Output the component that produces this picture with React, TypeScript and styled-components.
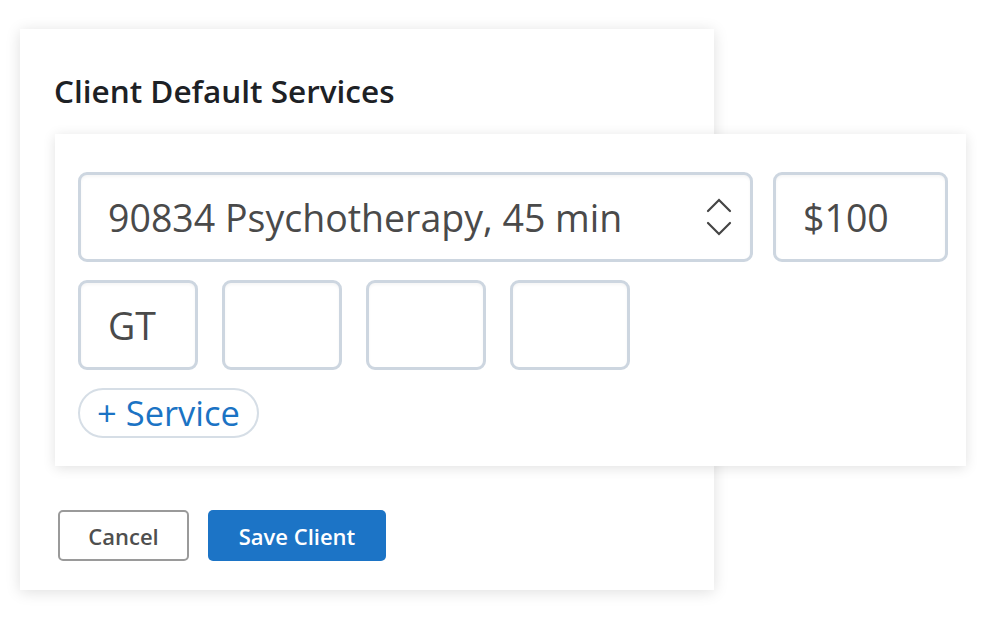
import styled, { createGlobalStyle } from "styled-components"

const GlobalStyle = createGlobalStyle`
    body {
        margin: 0;
        background: #ffffff;
        font-family: "Open Sans", "Liberation Sans", sans-serif;
    }
`

const Page = styled.div`
    padding: 29px 0 0 20px;
    width: 985px;
    height: 618px;
    box-sizing: border-box;
`

const Card = styled.section`
    width: 694px;
    box-sizing: border-box;
    padding: 42px 0 29px 34px;
    background: #fff;
    box-shadow: 0 2px 14px rgba(0, 0, 0, 0.13);
    display: flex;
    flex-direction: column;
`

const Title = styled.h2`
    margin: 0;
    font-size: 31.5px;
    line-height: 40px;
    font-weight: 600;
    color: #1d2125;
`

const Panel = styled.div`
    margin: 23px 0 0 1px;
    width: 911px;
    box-sizing: border-box;
    padding: 38px 18px 28px 23px;
    background: #fff;
    box-shadow: 0 2px 12px rgba(0, 0, 0, 0.12);
    display: flex;
    flex-direction: column;
    gap: 18px;
`

const Row = styled.div`
    display: flex;
    gap: 24px;
`

const TopRow = styled(Row)`
    gap: 20px;
`

const Field = styled.div<{ $w: number; $padRight?: number }>`
    flex-shrink: 0;
    width: ${p => p.$w}px;
    height: 90px;
    box-sizing: border-box;
    border: 3px solid #cdd6e0;
    border-radius: 9px;
    box-shadow: inset 0 2px 3px rgba(0, 0, 0, 0.04);
    display: flex;
    align-items: center;
    padding: 0 ${p => p.$padRight ?? 20}px 0 27px;
    font-size: 37.5px;
    color: #4a4a4a;
`

const SelectText = styled.span`
    flex: 1;
`

const Pill = styled.button`
    align-self: flex-start;
    width: 181px;
    height: 50px;
    box-sizing: border-box;
    border: 2px solid #d6dee6;
    border-radius: 25px;
    background: #fff;
    color: #1b73c4;
    font-family: inherit;
    font-size: 34.5px;
    line-height: 44px;
    padding: 0;
`

const Actions = styled.div`
    display: flex;
    gap: 19px;
    margin: 44px 0 0 4px;
`

const Button = styled.button<{ $primary?: boolean }>`
    height: 51px;
    box-sizing: border-box;
    padding: 0;
    border-radius: 5px;
    font-family: inherit;
    font-size: 22px;
    font-weight: 600;
    border: ${p => (p.$primary ? "none" : "2px solid #9a9a9a")};
    background: ${p => (p.$primary ? "#1c74c6" : "#fff")};
    color: ${p => (p.$primary ? "#fff" : "#4f4f4f")};
    width: ${p => (p.$primary ? "178px" : "131px")};
`

function UpDown() {
    return (
        <svg width="26" height="40" viewBox="0 0 26 40" fill="none" stroke="#454545" strokeWidth="2.2" strokeLinecap="round">
            <path d="M2 14 L13 3 L24 14" />
            <path d="M2 26 L13 37 L24 26" />
        </svg>
    )
}

export default function App() {
    return (
        <Page>
            <GlobalStyle />
            <Card>
                <Title>Client Default Services</Title>
                <Panel>
                    <TopRow>
                        <Field $w={675} $padRight={18}>
                            <SelectText>90834 Psychotherapy, 45 min</SelectText>
                            <UpDown />
                        </Field>
                        <Field $w={175}>$100</Field>
                    </TopRow>
                    <Row>
                        <Field $w={120}>GT</Field>
                        <Field $w={120} />
                        <Field $w={120} />
                        <Field $w={120} />
                    </Row>
                    <Pill>+ Service</Pill>
                </Panel>
                <Actions>
                    <Button>Cancel</Button>
                    <Button $primary>Save Client</Button>
                </Actions>
            </Card>
        </Page>
    )
}
